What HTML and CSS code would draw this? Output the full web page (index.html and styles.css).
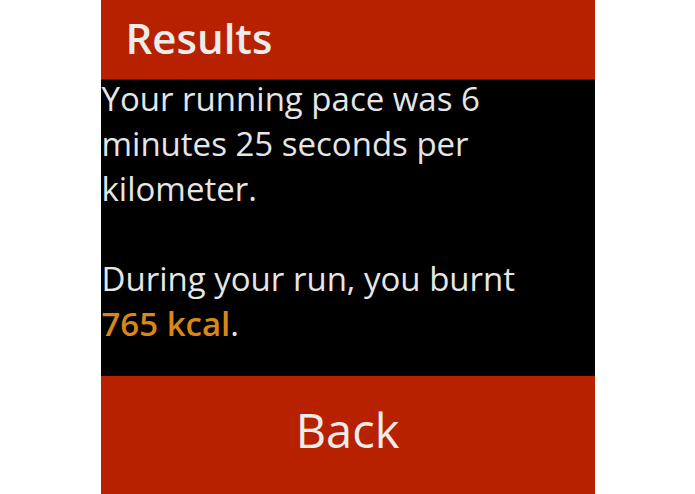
FILE: index.html
```html
<!DOCTYPE html>
<html lang="en">
<head>
<meta charset="utf-8">
<title>Results</title>
<link rel="stylesheet" href="styles.css">
</head>
<body>
<main class="watch">
  <header class="title-bar">
    <h1 class="title">Results</h1>
  </header>
  <section class="summary">
    <p class="summary-text">Your running pace was 6 minutes 25 seconds per kilometer.<br><br>During your run, you burnt <span class="highlight">765 kcal</span>.</p>
  </section>
  <button class="back-button" type="button">Back</button>
</main>
</body>
</html>
```

FILE: styles.css
```css
html, body {
  margin: 0;
  padding: 0;
  background: #ffffff;
}

body {
  display: flex;
  justify-content: center;
  font-family: "Open Sans", "Noto Sans", sans-serif;
}

.watch {
  width: 494px;
  height: 494px;
  display: flex;
  flex-direction: column;
  background: #000000;
  overflow: hidden;
}

.title-bar {
  height: 79px;
  flex: none;
  background: #b72100;
  border-bottom: 1px solid #3b2418;
  display: flex;
  align-items: center;
  padding-left: 25px;
}

.title {
  margin: 0 0 4px;
  font-size: 42px;
  font-weight: 600;
  color: #ececec;
  line-height: 1;
}

.summary {
  flex: 1;
  min-height: 0;
  padding: 0 0 0 1px;
}

.summary-text {
  margin: -4px 0 0;
  font-size: 33px;
  line-height: 45px;
  color: #e6e6e6;
}

.highlight {
  color: #da8717;
  font-weight: 600;
  white-space: nowrap;
}

.back-button {
  height: 118px;
  flex: none;
  border: 0;
  margin: 0;
  padding: 0 0 10px;
  background: #b72100;
  color: #ececec;
  font-family: inherit;
  font-size: 47px;
  display: flex;
  align-items: center;
  justify-content: center;
}
```
